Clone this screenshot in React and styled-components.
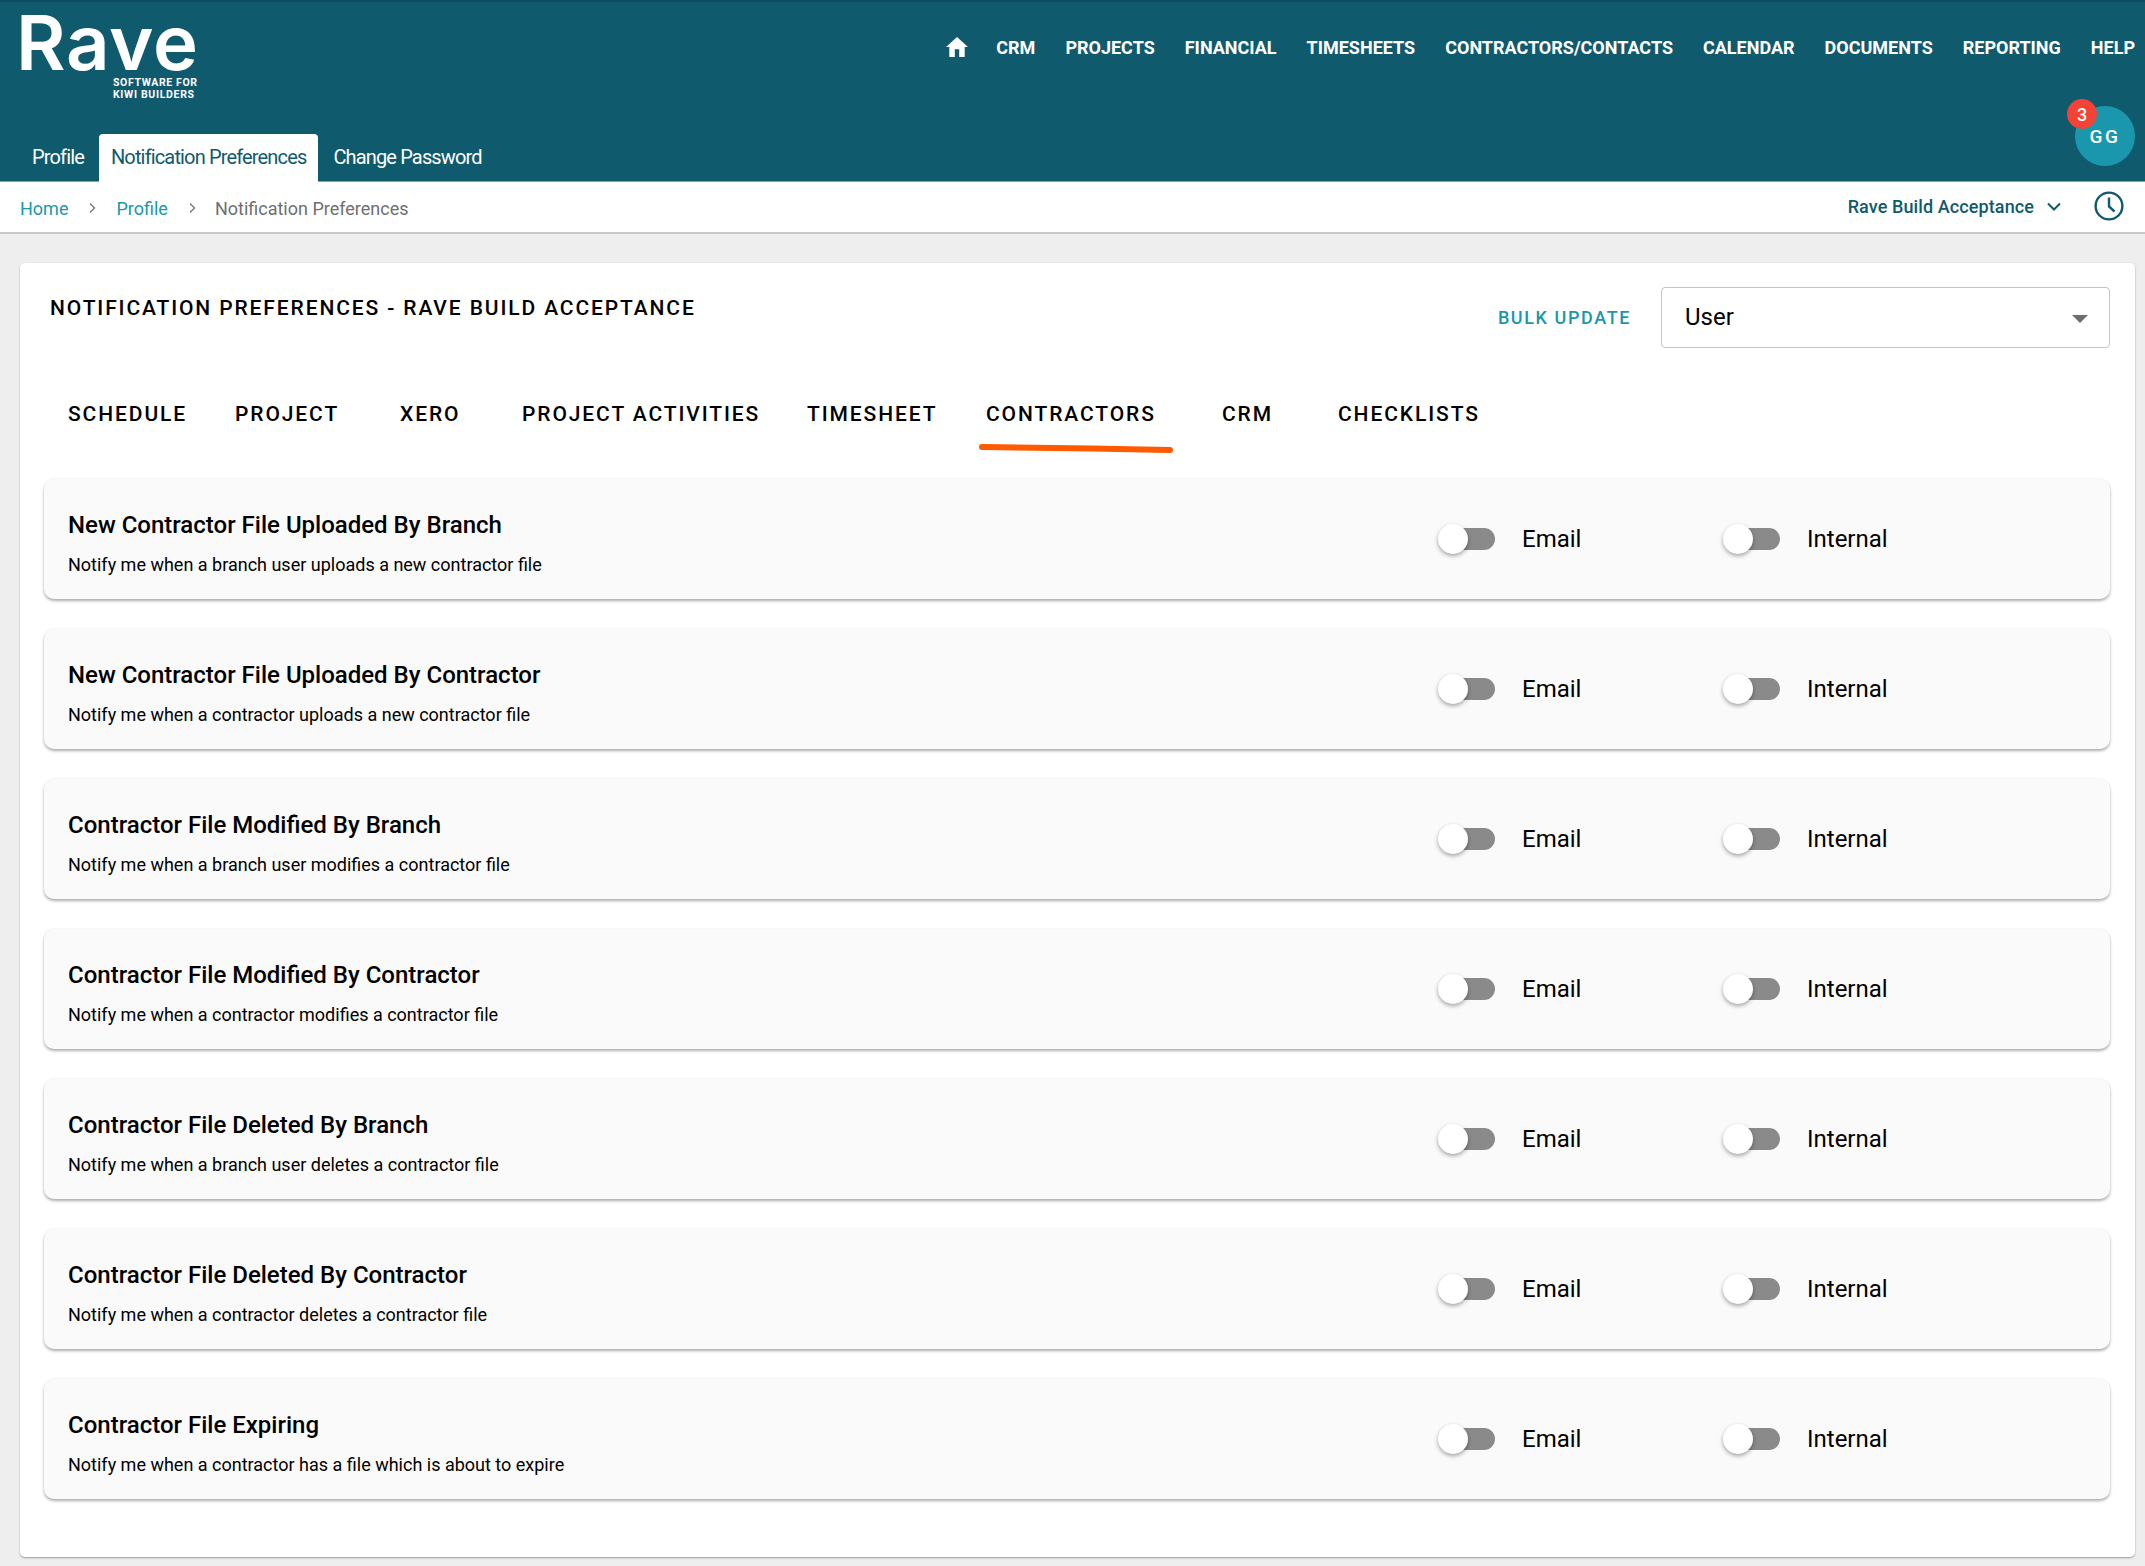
import React from "react";
import styled, { createGlobalStyle } from "styled-components";

const Global = createGlobalStyle`
  html, body { margin: 0; padding: 0; background: #eeeeee; }
  body { font-family: Roboto, "Liberation Sans", sans-serif; color: #000; width: 2145px; height: 1566px; overflow: hidden; }
  * { box-sizing: border-box; }
`;

const Header = styled.header`
  height: 182px;
  background: #105a6e;
  border-top: 2px solid #0c4c5e;
  border-bottom: 1px solid #7fa8b3;
  display: flex;
  flex-direction: column;
  justify-content: space-between;
`;
const TopBar = styled.div`
  display: flex;
  justify-content: space-between;
  align-items: flex-start;
  padding: 0 10px 0 20px;
`;
const Logo = styled.svg`
  display: block;
  width: 180px;
  height: 100px;
  fill: #fff;
`;
const LogoWord = styled.text`
  font-family: Inter, sans-serif;
  font-weight: 600;
  font-size: 76px;
`;
const LogoTag = styled.text`
  font-family: Roboto, sans-serif;
  font-weight: 700;
  font-size: 10.5px;
`;
const Nav = styled.nav`
  display: flex;
  align-items: center;
  gap: 30px;
  height: 32px;
  margin-top: 29px;
`;
const NavItem = styled.a`
  color: #fff;
  font-weight: 700;
  font-size: 18px;
  white-space: nowrap;
`;
const HomeIcon = styled.svg`
  width: 22px;
  height: 20px;
  margin-right: -2px;
  fill: #fff;
  display: block;
`;
const BottomBar = styled.div`
  display: flex;
  justify-content: space-between;
  align-items: flex-end;
  padding: 0 10px 0 32px;
`;
const SubTabs = styled.div`
  display: flex;
  align-items: flex-end;
`;
const SubTab = styled.a`
  height: 48px;
  display: flex;
  align-items: center;
  padding: 0 ${(p) => p.$right}px 2px ${(p) => p.$left}px;
  margin: 0 0 -1px 0;
  font-size: 20px;
  letter-spacing: -0.85px;
  border-radius: 4px 4px 0 0;
  background: ${(p) => (p.$active ? "#fff" : "transparent")};
  color: ${(p) => (p.$active ? "#105a6e" : "#fff")};
`;
const AvatarWrap = styled.div`
  position: relative;
  margin-bottom: 15px;
`;
const Avatar = styled.div`
  width: 60px;
  height: 60px;
  border-radius: 50%;
  background: #1a97ac;
  color: #fff;
  font-weight: 500;
  font-size: 19px;
  letter-spacing: 2.5px;
  display: flex;
  align-items: center;
  justify-content: center;
`;
const Badge = styled.span`
  position: absolute;
  left: -8px;
  top: -7px;
  width: 30px;
  height: 30px;
  border-radius: 50%;
  background: #f44336;
  color: #fff;
  font-weight: 500;
  font-size: 18px;
  display: flex;
  align-items: center;
  justify-content: center;
`;
const Crumbs = styled.div`
  height: 52px;
  background: #fff;
  border-bottom: 2px solid #c8c8c8;
  display: flex;
  align-items: center;
  justify-content: space-between;
  padding: 0 21px 2px 20px;
  font-size: 18px;
`;
const CrumbTrail = styled.div`
  display: flex;
  align-items: center;
  padding-top: 4px;
`;
const CrumbLink = styled.a`
  color: #1a97ac;
`;
const CrumbCurrent = styled.span`
  color: #6f6f6f;
`;
const CrumbSep = styled.svg`
  width: 10px;
  height: 14px;
  margin: 0 ${(p) => p.$after}px 0 19px;
  fill: none;
  stroke: #777;
  stroke-width: 1.4;
`;
const Company = styled.div`
  display: flex;
  align-items: center;
  color: #105a6e;
  font-weight: 500;
  letter-spacing: 0.1px;
`;
const CompanyChevron = styled.svg`
  width: 14px;
  height: 9px;
  margin: 0 33px 0 13px;
  fill: none;
  stroke: #105a6e;
  stroke-width: 2;
`;
const Clock = styled.svg`
  width: 30px;
  height: 30px;
  fill: none;
  stroke: #105a6e;
  stroke-width: 2.4;
  display: block;
`;
const Card = styled.main`
  margin: 29px 10px 0 20px;
  height: 1294px;
  background: #fff;
  border-radius: 5px;
  box-shadow: 0 1px 2px rgba(0, 0, 0, 0.35);
  padding: 24px 25px 0 24px;
`;
const CardHead = styled.div`
  display: flex;
  justify-content: space-between;
  align-items: flex-start;
  height: 61px;
`;
const Title = styled.h1`
  margin: 9px 0 0 6px;
  font-size: 21px;
  line-height: 24px;
  font-weight: 500;
  letter-spacing: 1.88px;
`;
const Bulk = styled.div`
  display: flex;
  align-items: center;
  gap: 30px;
`;
const BulkLabel = styled.span`
  color: #1a97ac;
  font-size: 18px;
  font-weight: 500;
  letter-spacing: 1.6px;
`;
const Select = styled.div`
  width: 449px;
  height: 61px;
  border: 1.5px solid #c4c4c4;
  border-radius: 4px;
  display: flex;
  align-items: center;
  justify-content: space-between;
  padding: 0 21px 2px 23px;
  font-size: 24px;
`;
const Caret = styled.span`
  width: 0;
  height: 0;
  border-left: 8px solid transparent;
  border-right: 8px solid transparent;
  border-top: 8px solid #6e6e6e;
  margin-top: 5px;
`;
const Tabs = styled.div`
  display: flex;
  height: 131px;
  padding: 50px 0 0 0;
`;
const Tab = styled.a`
  position: relative;
  display: block;
  flex: none;
  width: ${(p) => p.$w}px;
  height: 32px;
  line-height: 32px;
  font-size: 21px;
  font-weight: 500;
  letter-spacing: 1.9px;
  margin-left: ${(p) => p.$ml || 0}px;
`;
const TabMark = styled.svg`
  position: absolute;
  left: -7px;
  top: 46px;
  width: 194px;
  height: 10px;
`;
const Rows = styled.div`
  display: flex;
  flex-direction: column;
  gap: 30px;
`;
const Row = styled.section`
  height: 120px;
  background: #fafafa;
  border-radius: 10px;
  box-shadow: 0 2px 3px rgba(0, 0, 0, 0.32), 0 -1px 2px rgba(0, 0, 0, 0.03);
  display: grid;
  grid-template-columns: 1394px 285px 1fr;
  align-items: center;
`;
const RowText = styled.div`
  padding: 8px 0 0 24px;
`;
const RowTitle = styled.div`
  font-size: 24px;
  line-height: 30px;
  font-weight: 500;
`;
const RowDesc = styled.div`
  font-size: 18px;
  line-height: 22px;
  margin-top: 14px;
`;
const Pref = styled.label`
  display: flex;
  align-items: center;
  font-size: 24px;
`;
const Track = styled.span`
  position: relative;
  display: block;
  width: 53px;
  height: 22px;
  margin-left: 4px;
  border-radius: 11px;
  background: #8a8a8a;
  margin-right: 27px;
`;
const Thumb = styled.span`
  position: absolute;
  left: -4px;
  top: -4px;
  width: 30px;
  height: 30px;
  border-radius: 50%;
  background: #fff;
  box-shadow: 0 2px 4px rgba(0, 0, 0, 0.35);
`;

const navItems = ["CRM", "PROJECTS", "FINANCIAL", "TIMESHEETS", "CONTRACTORS/CONTACTS", "CALENDAR", "DOCUMENTS", "REPORTING", "HELP"];
const tabs = [
  ["SCHEDULE", 167], ["PROJECT", 165], ["XERO", 122], ["PROJECT ACTIVITIES", 285],
  ["TIMESHEET", 179], ["CONTRACTORS", 236], ["CRM", 116], ["CHECKLISTS", 160],
];
const rows = [
  ["New Contractor File Uploaded By Branch", "Notify me when a branch user uploads a new contractor file"],
  ["New Contractor File Uploaded By Contractor", "Notify me when a contractor uploads a new contractor file"],
  ["Contractor File Modified By Branch", "Notify me when a branch user modifies a contractor file"],
  ["Contractor File Modified By Contractor", "Notify me when a contractor modifies a contractor file"],
  ["Contractor File Deleted By Branch", "Notify me when a branch user deletes a contractor file"],
  ["Contractor File Deleted By Contractor", "Notify me when a contractor deletes a contractor file"],
  ["Contractor File Expiring", "Notify me when a contractor has a file which is about to expire"],
];

const Toggle = ({ label }) => (
  <Pref>
    <Track><Thumb /></Track>
    {label}
  </Pref>
);
const Sep = ({ after }) => (
  <CrumbSep $after={after} viewBox="0 0 10 14"><path d="M3 2.5 L7.5 7 L3 11.5" /></CrumbSep>
);

export default function App() {
  return (
    <>
      <Global />
      <Header>
        <TopBar>
          <Logo viewBox="0 0 180 100">
            <LogoWord x="-4" y="68" textLength="182" lengthAdjust="spacing">Rave</LogoWord>
            <LogoTag x="93" y="84" textLength="84" lengthAdjust="spacing">SOFTWARE FOR</LogoTag>
            <LogoTag x="93" y="96" textLength="81" lengthAdjust="spacing">KIWI BUILDERS</LogoTag>
          </Logo>
          <Nav>
            <HomeIcon viewBox="2 3 20 18"><path d="M10 21v-7h4v7h5v-9h3L12 3 2 12h3v9z" /></HomeIcon>
            {navItems.map((n) => <NavItem key={n}>{n}</NavItem>)}
          </Nav>
        </TopBar>
        <BottomBar>
          <SubTabs>
            <SubTab $left={0} $right={15}>Profile</SubTab>
            <SubTab $active $left={12} $right={12}>Notification Preferences</SubTab>
            <SubTab $left={15} $right={15}>Change Password</SubTab>
          </SubTabs>
          <AvatarWrap>
            <Avatar>GG</Avatar>
            <Badge>3</Badge>
          </AvatarWrap>
        </BottomBar>
      </Header>
      <Crumbs>
        <CrumbTrail>
          <CrumbLink>Home</CrumbLink><Sep after={19} />
          <CrumbLink>Profile</CrumbLink><Sep after={18} />
          <CrumbCurrent>Notification Preferences</CrumbCurrent>
        </CrumbTrail>
        <Company>
          Rave Build Acceptance
          <CompanyChevron viewBox="0 0 14 9"><path d="M1 1.5 L7 7.5 L13 1.5" /></CompanyChevron>
          <Clock viewBox="0 0 30 30">
            <circle cx="15" cy="15" r="13.4" />
            <path d="M15 6.5 V15.5 L20.5 20.5" />
          </Clock>
        </Company>
      </Crumbs>
      <Card>
        <CardHead>
          <Title>NOTIFICATION PREFERENCES - RAVE BUILD ACCEPTANCE</Title>
          <Bulk>
            <BulkLabel>BULK UPDATE</BulkLabel>
            <Select>User<Caret /></Select>
          </Bulk>
        </CardHead>
        <Tabs>
          {tabs.map(([t, w], i) => (
            <Tab key={t} $w={w} $ml={i === 0 ? 24 : 0}>
              {t}
              {t === "CONTRACTORS" && (
                <TabMark viewBox="0 0 194 10">
                  <path d="M3 3 C60 3.6 130 4.8 191 6" stroke="#ff5a00" strokeWidth="6" strokeLinecap="round" fill="none" />
                </TabMark>
              )}
            </Tab>
          ))}
        </Tabs>
        <Rows>
          {rows.map(([title, desc]) => (
            <Row key={title}>
              <RowText>
                <RowTitle>{title}</RowTitle>
                <RowDesc>{desc}</RowDesc>
              </RowText>
              <Toggle label="Email" />
              <Toggle label="Internal" />
            </Row>
          ))}
        </Rows>
      </Card>
    </>
  );
}
